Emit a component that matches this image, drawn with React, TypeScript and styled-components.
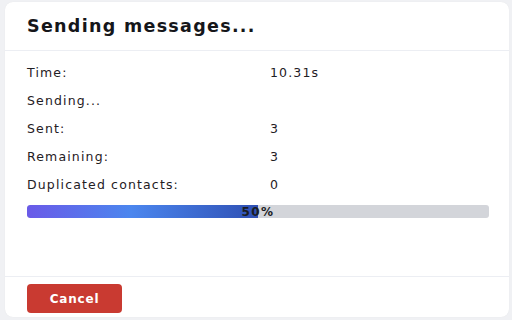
import React from "react";
import styled, { createGlobalStyle } from "styled-components";

const Global = createGlobalStyle`
  html, body { margin: 0; padding: 0; background: #f0f1f4; }
  body { font-family: "DejaVu Sans", "Liberation Sans", sans-serif; }
  #root { width: 512px; height: 320px; }
`;

const Page = styled.div`
  width: 512px;
  height: 320px;
  box-sizing: border-box;
  padding: 2px 3px 3px 5px;
  display: flex;
`;

const Card = styled.div`
  flex: 1;
  background: #ffffff;
  border-radius: 8px;
  display: flex;
  flex-direction: column;
  box-shadow: 0 0 1px rgba(0, 0, 0, 0.08);
  overflow: hidden;
`;

const Header = styled.div`
  height: 48px;
  display: flex;
  align-items: center;
  padding: 0 22px;
  border-bottom: 1px solid #eceef3;
`;

const Title = styled.h1`
  margin: 0;
  font-size: 17.5px;
  font-weight: 700;
  color: #15161a;
  letter-spacing: 1.3px;
`;

const Body = styled.div`
  flex: 1;
  padding: 7px 20px 0 22px;
  display: flex;
  flex-direction: column;
`;

const Grid = styled.div`
  display: grid;
  grid-template-columns: 243px 1fr;
  grid-auto-rows: 28px;
  align-items: center;
`;

const Cell = styled.div<{ $span?: boolean }>`
  font-size: 12.5px;
  color: #1f2024;
  letter-spacing: 1.15px;
  grid-column: ${(p) => (p.$span ? "1 / span 2" : "auto")};
`;

const Track = styled.div`
  position: relative;
  margin-top: 7px;
  height: 13px;
  border-radius: 3px;
  background: #d3d5da;
  overflow: hidden;
`;

const Fill = styled.div`
  height: 100%;
  background: linear-gradient(90deg, #6a5ae8 0%, #4b86ee 45%, #2f50b4 100%);
  border-radius: 3px 0 0 3px;
`;

const Percent = styled.span`
  position: absolute;
  inset: 0;
  display: flex;
  align-items: center;
  justify-content: center;
  font-size: 12px;
  font-weight: 700;
  color: #1a1c24;
  letter-spacing: 1.4px;
`;

const Footer = styled.div`
  height: 41px;
  box-sizing: border-box;
  border-top: 1px solid #eceef3;
  padding: 7px 22px 0;
`;

const CancelButton = styled.button`
  width: 95px;
  height: 29px;
  border: none;
  border-radius: 4px;
  background: #c93a31;
  color: #ffffff;
  font-family: "DejaVu Sans", "Liberation Sans", sans-serif;
  font-size: 12px;
  font-weight: 700;
  letter-spacing: 0.8px;
  cursor: pointer;
`;

const rows: [string, string | null][] = [
  ["Time:", "10.31s"],
  ["Sending...", null],
  ["Sent:", "3"],
  ["Remaining:", "3"],
  ["Duplicated contacts:", "0"],
];

export default function App() {
  const progress = 50;
  return (
    <>
      <Global />
      <Page>
        <Card>
          <Header>
            <Title>Sending messages...</Title>
          </Header>
          <Body>
            <Grid>
              {rows.map(([label, value]) =>
                value === null ? (
                  <Cell key={label} $span>
                    {label}
                  </Cell>
                ) : (
                  <React.Fragment key={label}>
                    <Cell>{label}</Cell>
                    <Cell>{value}</Cell>
                  </React.Fragment>
                )
              )}
            </Grid>
            <Track>
              <Fill style={{ width: `${progress}%` }} />
              <Percent>{progress}%</Percent>
            </Track>
          </Body>
          <Footer>
            <CancelButton>Cancel</CancelButton>
          </Footer>
        </Card>
      </Page>
    </>
  );
}
